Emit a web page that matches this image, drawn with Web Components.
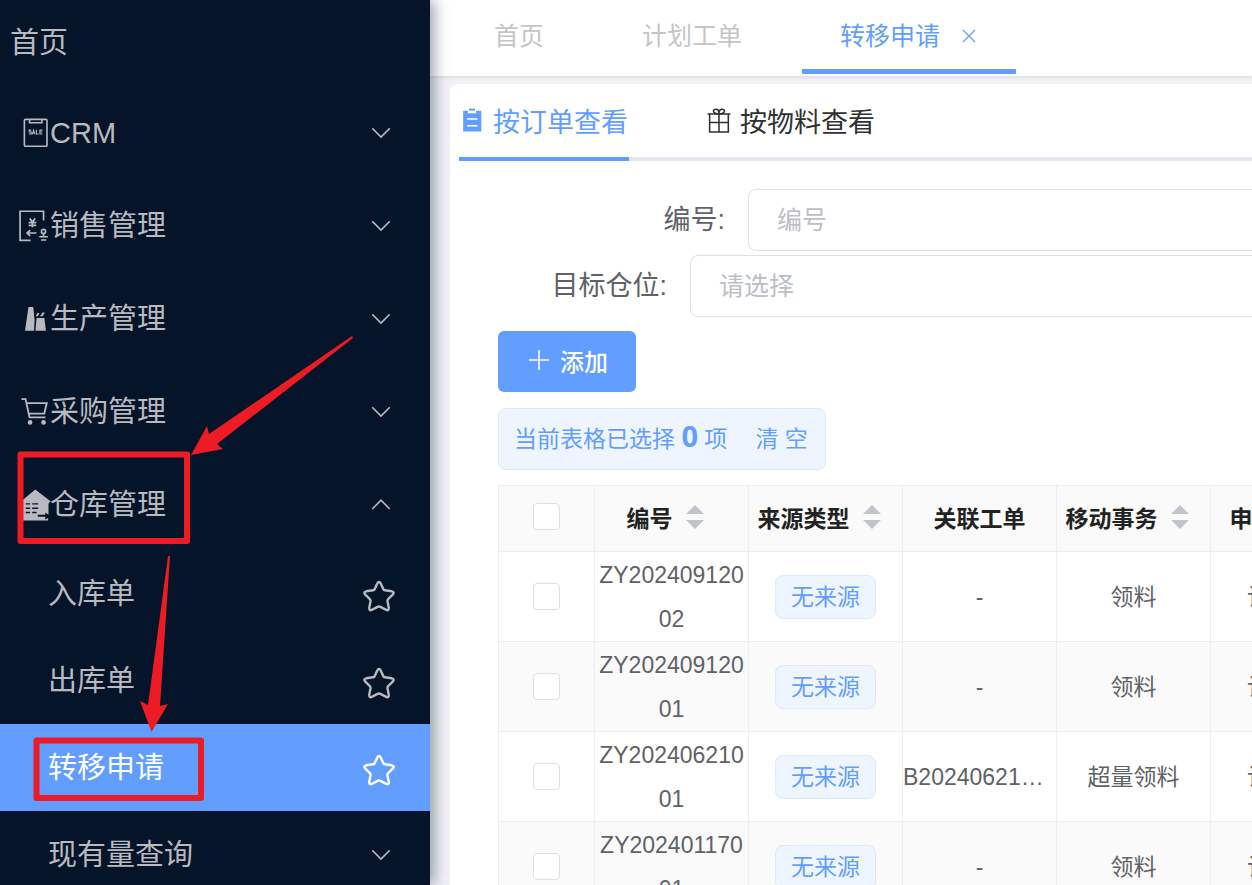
<!DOCTYPE html>
<html lang="zh-CN">
<head>
<meta charset="utf-8">
<title>转移申请</title>
<style>
  html, body {
    margin: 0;
    height: 100%;
    overflow: hidden;
  }
  body {
    font-family: "Liberation Sans", "Noto Sans CJK SC", sans-serif;
    color: #606266;
    background: #f0f2f5;
  }
</style>
</head>
<body>
<app-layout>
  <side-menu slot="aside">
    <menu-row href="#home" size="home">首页</menu-row>
    <menu-row icon="sale" toggle>CRM</menu-row>
    <menu-row icon="invoice" toggle>销售管理</menu-row>
    <menu-row icon="factory" toggle>生产管理</menu-row>
    <menu-row icon="cart" toggle>采购管理</menu-row>
    <menu-row icon="warehouse" toggle open>仓库管理</menu-row>
    <menu-row href="#in" size="sub" star>入库单</menu-row>
    <menu-row href="#out" size="sub" star>出库单</menu-row>
    <menu-row href="#transfer" size="sub" star active>转移申请</menu-row>
    <menu-row size="sub" toggle>现有量查询</menu-row>
  </side-menu>

  <page-tabs slot="header">
    <page-tab href="#home">首页</page-tab>
    <page-tab href="#plan">计划工单</page-tab>
    <page-tab href="#transfer" active closable>转移申请</page-tab>
  </page-tabs>

  <content-card>
    <view-tabs slot="tabs">
      <view-tab icon="tickets" active>按订单查看</view-tab>
      <view-tab icon="gift">按物料查看</view-tab>
    </view-tabs>
    <form-field label="编号:" placeholder="编号" style="--label-width: 227px"></form-field>
    <form-field label="目标仓位:" placeholder="请选择" type="select" style="--label-width: 169px"></form-field>
    <add-button>添加</add-button>
    <selection-info count="0"></selection-info>
    <order-table></order-table>
  </content-card>
</app-layout>
<guide-marks></guide-marks>

<script>
const ICONS = {
  down: '<path d="M5 8.200l7 7 7-7" fill="none" stroke="currentColor" stroke-width="1.300"/>',
  up: '<path d="M5 15.200l7-7 7 7" fill="none" stroke="currentColor" stroke-width="1.300"/>',
  close: '<path d="M4 4l16 16M20 4L4 20" fill="none" stroke="currentColor" stroke-width="1.7"/>',
  plus: '<path d="M12 2v20M2 12h20" fill="none" stroke="currentColor" stroke-width="1.5"/>',
  star: '<path transform="translate(0 1.300)" d="M12 2.200Q12.700 2.200 13.200 3.300L15 7.200Q15.300 8 16.200 8.100L21 8.800Q23.200 9.300 21.800 11L18.400 14.400Q17.900 15 18 15.800L18.900 20.500Q19 22.700 17.100 21.900L13 19.800Q12 19.300 11 19.800L6.900 21.900Q5 22.700 5.100 20.500L6 15.800Q6.100 15 5.600 14.400L2.200 11Q.8 9.300 3 8.800L7.800 8.100Q8.700 8 9 7.200L10.800 3.300Q11.300 2.200 12 2.200Z" fill="none" stroke="currentColor" stroke-width="1.700"/>',
  sale: '<g fill="none" stroke="currentColor"><rect x="2.200" y=".3" width="21" height="25" rx="1" stroke-width="1.500"/><path d="M7 1v2.500h11.500V1" stroke-width="1.500"/><path d="M8.600 10.300H6.600v1.700h2v1.900H6.400M9.600 14.300l1.200-4 1.200 4M10 13h1.600M13.400 10v3.900h2M19 10.300h-2.400v3.600H19M16.600 12.100h2.200" stroke-width="1"/></g>',
  invoice: '<g fill="none" stroke="currentColor"><path d="M20 8V-.700H-1.800v27H8" stroke-width="1.600"/><path d="M7.200 6l2.500 3.400 2.500-3.400M9.700 9.200v5M6.200 9.900h7M6.200 12.400h7" stroke-width="1.600"/><path d="M13.500 19.500H5M7.600 16.800L4.700 19.500l2.900 2.700" stroke-width="1.600"/><circle cx="20" cy="18" r="1.900" stroke-width="1.500"/><path d="M20 19.800v3.700M16 23h8M17.700 26h4.800" stroke-width="1.500"/></g>',
  factory: '<path d="M2.800 24L6 1.800h4.500l1.200 12.700-.5 9.500zM12.500 24L13.500 12h7.300l1.400 12zM12.700 10.500L14.300 7.500h2l-1.600 3zM16.700 10.500l2.300-3.500h2.200l-2 3.500z" fill="currentColor"/>',
  cart: '<g fill="none" stroke="currentColor" stroke-width="1.700"><path d="M-.5 1h3.800L7 18h14.800M4.300 4.700h18.700l-2.300 9.800H6.300"/></g><g fill="currentColor"><circle cx="7.500" cy="22.700" r="2.200"/><circle cx="20" cy="22.700" r="2.200"/></g>',
  warehouse: '<path d="M-.8 9.500L12.300-1.500 26.500 9.500l-1.900 2V22l-3-2v2h-7v2h7v2.500l2.700-1.500V27.500H0V11z" fill="currentColor"/><path d="M3.500 12h4M9.500 12h5.500M3.500 16h4M9.500 16h5.500M3.500 20h4M9.500 20h4" stroke="#051428" stroke-width="1.300"/>',
  tickets: '<path d="M4 3.500h4.500V6h8V3.500H21.500V23.500H4z" fill="currentColor"/><path d="M9.500 1.500h6v2h-6z" fill="currentColor"/><path d="M7.800 11.500h10M7.800 18h10" stroke="#fff" stroke-width="1.500"/>',
  gift: '<g fill="none" stroke="currentColor" stroke-width="1.500"><path d="M1.500 6.700h22M3.500 6.700V24h18V6.700M12.500 6.700V24M3.500 15h18"/><path d="M12.500 6.700C6 6.700 6 2.200 9.500 2.200c2.300 0 3 2 3 4.500C12.500 4.200 13.200 2.200 15.500 2.200 19 2.200 19 6.700 12.500 6.700z"/></g>',
};

const define = (name, html, setup) => {
  const template = document.createElement('template');
  template.innerHTML = html;

  customElements.define(name, class extends HTMLElement {
    constructor() {
      super();
      this.attachShadow({ mode: 'open' });
    }

    connectedCallback() {
      if (this.shadowRoot.childNodes.length) return;
      this.shadowRoot.appendChild(template.content.cloneNode(true));
      if (setup) setup(this, this.shadowRoot);
    }
  });
};

define('app-icon', `
<style>
  :host { display: block; flex: none; width: 24px; height: 24px; }
  svg { display: block; width: 100%; height: 100%; overflow: visible; }
</style>
<svg aria-hidden="true"></svg>
`, (el, root) => {
  const svg = root.querySelector('svg');
  const size = el.getAttribute('box') || 24;
  svg.setAttribute('viewBox', `0 0 ${size} ${size}`);
  svg.innerHTML = ICONS[el.getAttribute('name')] || '';
});

define('app-layout', `
<style>
  :host { display: grid; grid-template-columns: 430px minmax(0, 1fr); height: 100vh; overflow: hidden; }
  aside { position: relative; z-index: 1; background: #051428; box-shadow: 4px 0 14px rgba(0, 21, 41, .4); }
  .main { display: flex; flex-direction: column; min-width: 0; overflow: hidden; }
  header { background: #fff; box-shadow: 0 1px 4px rgba(0, 21, 41, .12); }
  /* the page is wider than the window and runs off to the right */
  main { min-width: 1100px; padding: 8px 20px; box-sizing: border-box; }
</style>
<aside><slot name="aside"></slot></aside>
<div class="main">
  <header><slot name="header"></slot></header>
  <main><slot></slot></main>
</div>
`);

define('side-menu', `
<style>
  :host { display: block; height: 100vh; overflow: hidden; }
  nav { display: flex; flex-direction: column; }
</style>
<nav><slot></slot></nav>
`);

define('menu-row', `
<style>
  :host { display: flex; align-items: center; flex: none; height: 93px; padding: 2px 34px 0 22px; box-sizing: border-box; color: #b8bac0; font-size: 29px; }
  :host([size="home"]) { height: 85px; padding: 0 34px 0 10px; }
  :host([size="sub"]) { height: 87px; padding: 0 34px 0 48px; }
  :host([active]) { background: #629eff; color: #fff; }
  a, button { font: inherit; color: inherit; background: none; border: 0; padding: 0; text-decoration: none; text-align: left; cursor: pointer; }
  .row { display: flex; align-items: center; flex: 1; }
  .text { flex: 1; line-height: 44px; }
  .lead { width: 28px; height: 28px; }
  .arrow { width: 30px; height: 30px; }
  .star app-icon { width: 34px; height: 34px; }
</style>
`, (el, root) => {
  const icon = el.getAttribute('icon');
  const toggle = el.hasAttribute('toggle');
  const row = document.createElement(toggle ? 'button' : 'a');
  row.className = 'row';
  if (toggle) {
    row.type = 'button';
    row.setAttribute('aria-expanded', el.hasAttribute('open'));
  } else {
    row.href = el.getAttribute('href');
  }
  row.innerHTML = `
    ${icon ? `<app-icon class="lead" name="${icon}" box="26"></app-icon>` : ''}
    <span class="text"><slot></slot></span>
    ${toggle ? `<app-icon class="arrow" name="${el.hasAttribute('open') ? 'up' : 'down'}"></app-icon>` : ''}
  `;
  root.appendChild(row);

  if (el.hasAttribute('star')) {
    const star = document.createElement('button');
    star.type = 'button';
    star.className = 'star';
    star.setAttribute('aria-label', '收藏');
    star.innerHTML = '<app-icon name="star"></app-icon>';
    root.appendChild(star);
  }
});

define('page-tabs', `
<style>
  :host { display: flex; gap: 22px; height: 76px; padding-left: 26px; }
</style>
<slot></slot>
`);

define('page-tab', `
<style>
  :host { display: flex; align-items: center; flex: none; height: 74px; padding: 2px 38px 0; box-sizing: border-box; border-bottom: 5px solid transparent; color: #c5c5c5; font-size: 25px; }
  :host([active]) { color: #629eff; border-color: #629eff; }
  a { color: inherit; text-decoration: none; line-height: 36px; }
  button { display: none; padding: 0; margin-left: 20px; border: 0; background: none; color: inherit; }
  :host([closable]) button { display: block; }
  app-icon { width: 18px; height: 18px; }
</style>
<a><slot></slot></a>
<button type="button" aria-label="关闭"><app-icon name="close"></app-icon></button>
`, (el, root) => {
  root.querySelector('a').href = el.getAttribute('href');
});

define('content-card', `
<style>
  :host { display: block; padding-left: 9px; background: #fff; border-radius: 8px; }
  .body { display: flex; flex-direction: column; align-items: flex-start; padding: 28px 0 0 39px; }
</style>
<slot name="tabs"></slot>
<div class="body"><slot></slot></div>
`);

define('view-tabs', `
<style>
  :host { display: flex; gap: 77px; height: 77px; box-shadow: inset 0 -4px #e4e7ed; }
</style>
<slot></slot>
`);

define('view-tab', `
<style>
  :host { display: block; color: #303133; font-size: 27px; }
  :host([active]) { color: #629eff; }
  button { display: flex; align-items: center; gap: 7px; height: 77px; padding: 0 1px 1px 0; border: 0; border-bottom: 4px solid transparent; background: none; color: inherit; font: inherit; box-sizing: border-box; }
  :host([active]) button { border-color: #629eff; }
  app-icon { width: 27px; height: 27px; }
</style>
<button type="button"><slot></slot></button>
`, (el, root) => {
  const icon = document.createElement('app-icon');
  icon.setAttribute('name', el.getAttribute('icon'));
  icon.setAttribute('box', 26);
  root.querySelector('button').prepend(icon);
});

define('form-field', `
<style>
  :host { display: flex; gap: 23px; align-self: stretch; margin-bottom: 4px; }
  label { flex: none; width: var(--label-width); text-align: right; font-size: 27px; line-height: 62px; }
  input, select { flex: 1; min-width: 0; height: 62px; box-sizing: border-box; padding: 0 28px; border: 1px solid #dcdfe6; border-radius: 8px; background: #fff; font: inherit; font-size: 25px; color: #bcbec6; appearance: none; }
  input::placeholder { color: #bcbec6; opacity: 1; }
</style>
<label for="field"></label>
`, (el, root) => {
  const placeholder = el.getAttribute('placeholder');
  const isSelect = el.getAttribute('type') === 'select';
  const field = document.createElement(isSelect ? 'select' : 'input');
  field.id = 'field';
  if (isSelect) {
    field.add(new Option(placeholder, ''));
  } else {
    field.type = 'text';
    field.placeholder = placeholder;
  }
  root.querySelector('label').textContent = el.getAttribute('label');
  root.appendChild(field);
});

define('add-button', `
<style>
  :host { display: block; margin: 10px 0 16px; }
  button { display: flex; align-items: center; gap: 9px; height: 61px; padding: 0 28px 3px 29px; border: 0; border-radius: 6px; background: #629eff; color: #fff; font: inherit; font-size: 24px; font-weight: 500; }
</style>
<button type="button"><app-icon name="plus"></app-icon><slot></slot></button>
`);

define('selection-info', `
<style>
  :host { display: flex; align-items: center; height: 62px; padding: 0 17px 5px 15px; margin-bottom: 15px; box-sizing: border-box; border: 1px solid #d9e9ff; border-radius: 8px; background: #eff5ff; color: #629eff; font-size: 23px; }
  span { white-space: pre; }
  b { font-family: "Open Sans", "Noto Sans", sans-serif; font-size: 29px; line-height: 32px; }
  button { margin-left: 28px; padding: 0; border: 0; background: none; color: inherit; font: inherit; }
</style>
<span>当前表格已选择 <b></b> 项</span>
<button type="button">清 空</button>
`, (el, root) => {
  root.querySelector('b').textContent = el.getAttribute('count');
});

const COLUMNS = [
  { title: '编号', width: 154, sortable: true },
  { title: '来源类型', width: 154, sortable: true },
  { title: '关联工单', width: 154 },
  { title: '移动事务', width: 154, sortable: true },
  { title: '申请部门', width: 174, sortable: true },
];

const ORDERS = [
  ['ZY20240912002', '无来源', '-', '领料', '计划部 01'],
  ['ZY20240912001', '无来源', '-', '领料', '计划部 01'],
  ['ZY20240621001', '无来源', 'B20240621001', '超量领料', '计划部 01'],
  ['ZY20240117001', '无来源', '-', '领料', '计划部 01'],
];

define('order-table', `
<style>
  :host { display: block; }
  table { table-layout: fixed; border-collapse: separate; border-spacing: 0; border: 1px solid #ebeef5; border-width: 1px 0 0 1px; font-size: 23px; }
  th, td { padding: 0; border: 1px solid #ebeef5; border-width: 0 1px 1px 0; text-align: center; box-sizing: border-box; }
  th { height: 66px; padding-bottom: 4px; background: #fafafa; color: #222; }
  td { height: 90px; line-height: 44px; overflow-wrap: anywhere; }
  tbody tr:nth-child(even) td { background: #fafafa; }
  .head { display: flex; align-items: center; justify-content: center; }
  .sort { display: flex; flex-direction: column; align-items: center; gap: 6px; width: 44px; }
  .sort i { border: 9px solid transparent; border-top-width: 0; border-bottom-color: #c0c4cc; }
  .sort i + i { border-width: 9px 9px 0; border-top-color: #c0c4cc; }
  .ellipsis { overflow: hidden; white-space: nowrap; text-overflow: ellipsis; }
  .tag { display: inline-block; vertical-align: middle; padding: 0 15px; line-height: 42px; border: 1px solid #d9e9ff; border-radius: 8px; background: #eff5ff; color: #629eff; }
  input { appearance: none; display: block; width: 27px; height: 27px; margin: 0 auto; border: 1px solid #dcdfe6; border-radius: 4px; background: #fff; }
  input:checked { background: #629eff; }
</style>
<table>
  <colgroup><col style="width: 96px"></colgroup>
  <thead><tr><th><input type="checkbox" aria-label="全选"></th></tr></thead>
  <tbody></tbody>
</table>
`, (el, root) => {
  const total = COLUMNS.reduce((sum, { width }) => sum + width, 97);
  root.querySelector('table').style.width = `${total}px`;

  COLUMNS.forEach(({ title, width, sortable }) => {
    const col = document.createElement('col');
    col.style.width = `${width}px`;
    root.querySelector('colgroup').appendChild(col);

    const th = document.createElement('th');
    th.innerHTML = `<div class="head">${title}${sortable ? '<span class="sort"><i></i><i></i></span>' : ''}</div>`;
    root.querySelector('thead tr').appendChild(th);
  });

  root.querySelector('tbody').innerHTML = ORDERS.map(([no, source, work, move, dept]) => `
    <tr>
      <td><input type="checkbox" aria-label="${no}"></td>
      <td>${no}</td>
      <td><span class="tag">${source}</span></td>
      <td><div class="ellipsis">${work}</div></td>
      <td>${move}</td>
      <td>${dept}</td>
    </tr>`).join('');
});

// red boxes and arrows drawn over the menu
define('guide-marks', `
<style>
  :host { position: absolute; top: 0; left: 0; z-index: 2; pointer-events: none; }
  svg { display: block; }
</style>
<svg width="430" height="885" aria-hidden="true">
  <g fill="none" stroke="#ed1c24" stroke-width="6" stroke-linejoin="round">
    <rect x="20.500" y="454.500" width="166.500" height="86.500"/>
    <rect x="36.500" y="740.500" width="164.500" height="57.500"/>
  </g>
  <g fill="#ed1c24">
    <path d="M191 455L207 426L209 434L352 336L353 338L217 444L223 449Z"/>
    <path d="M151.500 732L140 701L148 705L168 556H170L160 706L168 704Z"/>
  </g>
</svg>
`);
</script>
</body>
</html>
